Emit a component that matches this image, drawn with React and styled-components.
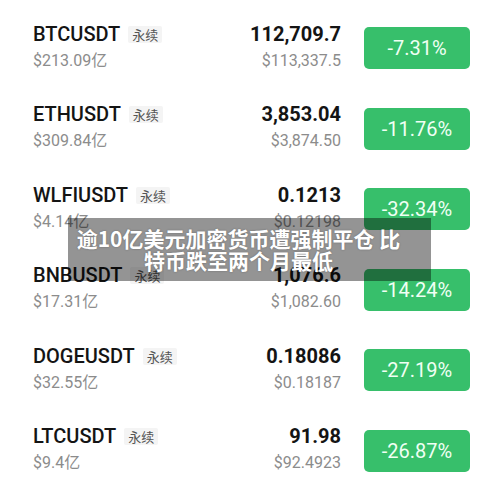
import React from "react";
import styled, { createGlobalStyle } from "styled-components";

const Global = createGlobalStyle`
  html, body { margin: 0; padding: 0; background: #ffffff; }
  body { font-family: Roboto, "Noto Sans CJK SC", sans-serif; }
`;

const Page = styled.div`
  position: relative;
  width: 500px;
  height: 499px;
  overflow: hidden;
  background: #ffffff;
`;

const List = styled.div`
  display: flex;
  flex-direction: column;
  padding-top: 6px;
`;

const Row = styled.div`
  display: flex;
  align-items: center;
  height: 80.5px;
  padding: 0 30px 0 33px;
`;

const Info = styled.div`
  flex: 1;
  display: flex;
  flex-direction: column;
`;

const SymbolLine = styled.div`
  display: flex;
  align-items: center;
  gap: 8px;
  height: 24px;
`;

const Symbol = styled.span`
  font-family: Roboto, sans-serif;
  font-weight: 500;
  font-size: 20px;
  line-height: 24px;
  color: #141414;
`;

const Tag = styled.span`
  font-family: "Noto Sans CJK SC", sans-serif;
  font-size: 13px;
  line-height: 17px;
  padding: 0 4px;
  margin-top: 1px;
  background: #f4f4f4;
  color: #555555;
  border-radius: 2px;
`;

const Sub = styled.div`
  font-family: Roboto, "Noto Sans CJK SC", sans-serif;
  font-size: 16px;
  line-height: 20px;
  margin-top: 5px;
  color: #8c8c8c;
`;

const PriceCol = styled.div`
  display: flex;
  flex-direction: column;
  align-items: flex-end;
  margin-right: 23px;
`;

const Price = styled.div`
  font-family: Roboto, sans-serif;
  font-weight: 700;
  font-size: 20px;
  line-height: 24px;
  color: #141414;
`;

const Badge = styled.div`
  width: 106px;
  height: 42px;
  margin-top: 4px;
  border-radius: 5px;
  background: #37bf6b;
  color: #f0fff4;
  display: flex;
  align-items: center;
  justify-content: center;
  font-family: Roboto, sans-serif;
  font-size: 20px;
`;

const Caption = styled.div`
  position: absolute;
  left: 68px;
  top: 218px;
  width: 363px;
  height: 63px;
  box-sizing: border-box;
  padding: 9px 28px 0 6px;
  background: rgba(0, 0, 0, 0.42);
  color: #ffffff;
  font-family: "Noto Sans CJK SC", sans-serif;
  font-weight: 700;
  font-size: 21px;
  line-height: 22px;
  text-align: center;
  text-shadow: 0 0 2px rgba(0, 0, 0, 0.3);
`;

const rows = [
  ["BTCUSDT", "$213.09亿", "112,709.7", "$113,337.5", "-7.31%"],
  ["ETHUSDT", "$309.84亿", "3,853.04", "$3,874.50", "-11.76%"],
  ["WLFIUSDT", "$4.14亿", "0.1213", "$0.12198", "-32.34%"],
  ["BNBUSDT", "$17.31亿", "1,076.6", "$1,082.60", "-14.24%"],
  ["DOGEUSDT", "$32.55亿", "0.18086", "$0.18187", "-27.19%"],
  ["LTCUSDT", "$9.4亿", "91.98", "$92.4923", "-26.87%"],
];

export default function App() {
  return (
    <Page>
      <Global />
      <List>
        {rows.map(([sym, vol, price, usd, pct]) => (
          <Row key={sym}>
            <Info>
              <SymbolLine>
                <Symbol>{sym}</Symbol>
                <Tag>永续</Tag>
              </SymbolLine>
              <Sub>{vol}</Sub>
            </Info>
            <PriceCol>
              <Price>{price}</Price>
              <Sub>{usd}</Sub>
            </PriceCol>
            <Badge>{pct}</Badge>
          </Row>
        ))}
      </List>
      <Caption>逾10亿美元加密货币遭强制平仓 比特币跌至两个月最低</Caption>
    </Page>
  );
}
